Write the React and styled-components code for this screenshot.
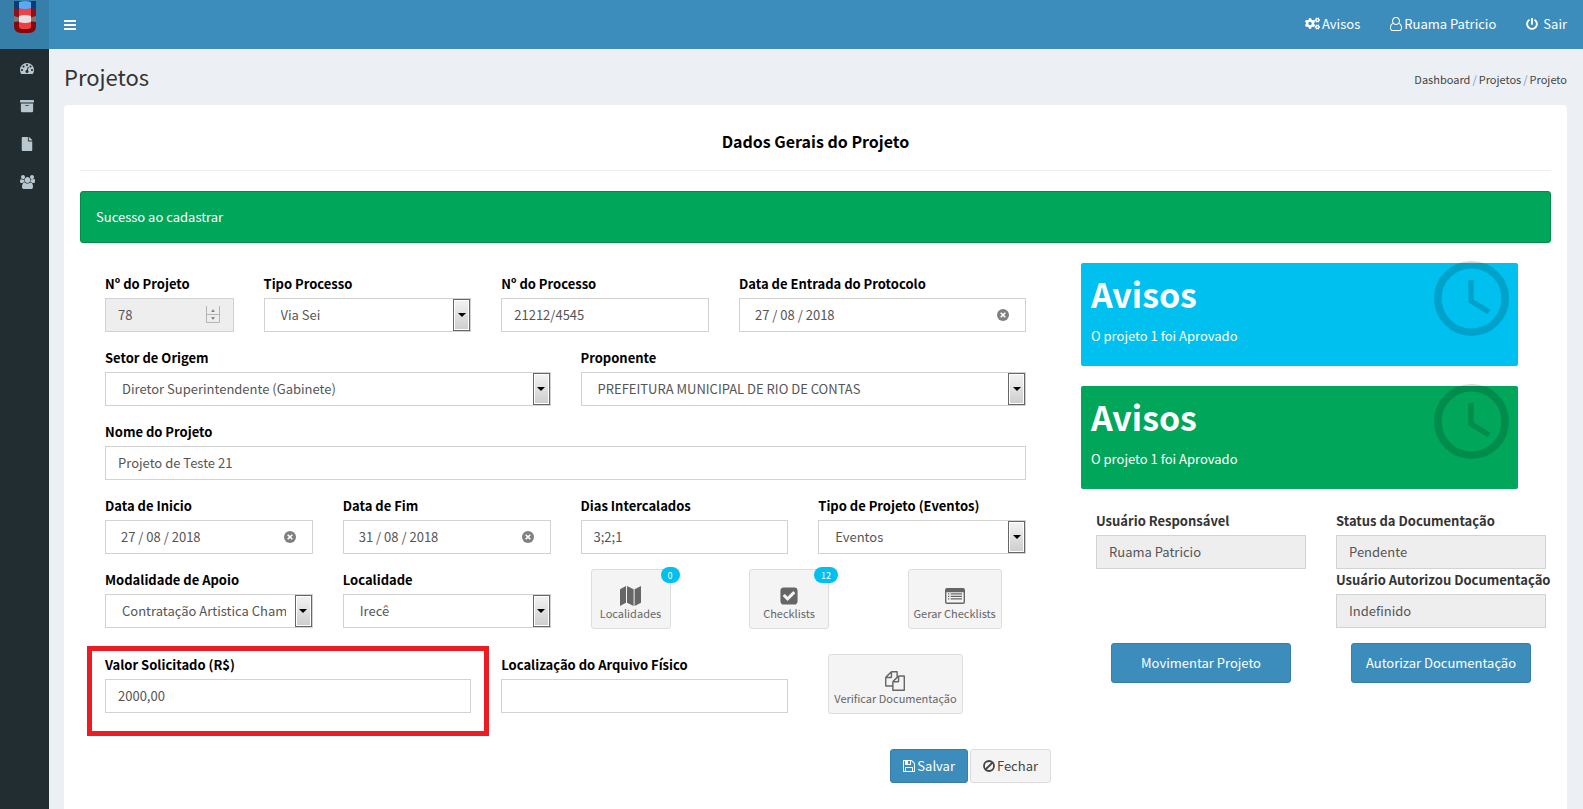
import React, { useState } from "react";
import styled, { createGlobalStyle } from "styled-components";
import { FaArchive, FaCogs, FaFile, FaPowerOff } from "react-icons/fa";

const GlobalStyle = createGlobalStyle`
  *, *::before, *::after {
    box-sizing: border-box;
  }
  body {
    margin: 0;
    background: #ecf0f5;
    color: #333;
    font-family: "Noto Sans CJK SC", "Noto Sans", sans-serif;
    font-size: 13px;
    line-height: 20px;
  }
  button, input, select {
    font: inherit;
  }
  a {
    color: inherit;
    text-decoration: none;
  }
`;

/* ---------- icons ---------- */

const Glyph = styled.svg`
  display: block;
  flex: none;
  height: ${props => props.$size || 14}px;
  fill: currentColor;
`;

const BarsIcon = () => (
  <Glyph $size={10} viewBox="0 0 12 10" shapeRendering="crispEdges" aria-hidden="true">
    <path d="M0 0h12v2H0zM0 4h12v2H0zM0 8h12v2H0z" />
  </Glyph>
);

const DashboardIcon = () => (
  <Glyph viewBox="0 0 1792 1792" aria-hidden="true">
    <path d="M384 1152q0-53-37.5-90.5t-90.5-37.5-90.5 37.5-37.5 90.5 37.5 90.5 90.5 37.5 90.5-37.5 37.5-90.5zm192-448q0-53-37.5-90.5t-90.5-37.5-90.5 37.5-37.5 90.5 37.5 90.5 90.5 37.5 90.5-37.5 37.5-90.5zm428 481l101-382q6-26-7.5-48.5t-38.5-29.5-48 6.5-30 39.5l-101 382q-60 5-107 43.5t-63 98.5q-20 77 20 146t117 89 146-20 89-117q16-60-6-117t-72-91zm660-33q0-53-37.5-90.5t-90.5-37.5-90.5 37.5-37.5 90.5 37.5 90.5 90.5 37.5 90.5-37.5 37.5-90.5zm-640-640q0-53-37.5-90.5t-90.5-37.5-90.5 37.5-37.5 90.5 37.5 90.5 90.5 37.5 90.5-37.5 37.5-90.5zm448 192q0-53-37.5-90.5t-90.5-37.5-90.5 37.5-37.5 90.5 37.5 90.5 90.5 37.5 90.5-37.5 37.5-90.5zm320 448q0 261-141 483-19 29-54 29h-1402q-35 0-54-29-141-221-141-483 0-182 71-348t191-286 286-191 348-71 348 71 286 191 191 286 71 348z" />
  </Glyph>
);

const GroupIcon = () => (
  <Glyph viewBox="0 0 1920 1792" aria-hidden="true">
    <path d="M593 896q-162 5-265 128h-134q-82 0-138-40.5t-56-118.5q0-353 124-353 6 0 43.5 21t97.5 42.5 119 21.5q67 0 133-23-5 37-5 66 0 159 90 294zm1071 637q0 120-73 189.5t-194 69.5h-874q-121 0-194-69.5t-73-189.5q0-53 3.5-103.5t14-109 26.5-108.5 43-97.5 62-81 85.5-53.5 111.5-20q10 0 43 21.5t73 48 107 48 135 21.5 135-21.5 107-48 73-48 43-21.5q61 0 111.5 20t85.5 53.5 62 81 43 97.5 26.5 108.5 14 109 3.5 103.5zm-1024-1277q0 106-75 181t-181 75-181-75-75-181 75-181 181-75 181 75 75 181zm704 384q0 159-112.5 271.5t-271.5 112.5-271.5-112.5-112.5-271.5 112.5-271.5 271.5-112.5 271.5 112.5 112.5 271.5zm576 225q0 78-56 118.5t-138 40.5h-134q-103-123-265-128 90-135 90-294 0-29-5-66 66 23 133 23 59 0 119-21.5t97.5-42.5 43.5-21q124 0 124 353zm-128-609q0 106-75 181t-181 75-181-75-75-181 75-181 181-75 181 75 75 181z" />
  </Glyph>
);

const UserIcon = () => (
  <Glyph viewBox="0 0 1536 1792" aria-hidden="true">
    <path d="M1201 784q47 14 89.5 38t89 73 79.5 115.5 55 172 22 236.5q0 154-100 263.5t-241 109.5h-854q-141 0-241-109.5t-100-263.5q0-131 22-236.5t55-172 79.5-115.5 89-73 89.5-38q-79-125-79-272 0-104 40.5-198.5t109.5-163.5 163.5-109.5 198.5-40.5 198.5 40.5 163.5 109.5 109.5 163.5 40.5 198.5q0 147-79 272zm-433-656q-159 0-271.5 112.5t-112.5 271.5 112.5 271.5 271.5 112.5 271.5-112.5 112.5-271.5-112.5-271.5-271.5-112.5zm427 1536q88 0 150.5-71.5t62.5-173.5q0-239-78.5-377t-225.5-145q-145 127-336 127t-336-127q-147 7-225.5 145t-78.5 377q0 102 62.5 173.5t150.5 71.5h854z" />
  </Glyph>
);

const MapIcon = () => (
  <Glyph $size={20} viewBox="0 0 21 20" aria-hidden="true">
    <path d="M0 3.2 6 0v16.8L0 20zM7 0l6.6 3.2V20L7 16.8zM14.6 3.2 21 0v16.8L14.6 20z" />
  </Glyph>
);

const CheckIcon = () => (
  <Glyph $size={20} viewBox="0 0 1792 1792" aria-hidden="true">
    <path d="M813 1299l614-614q19-19 19-45t-19-45l-102-102q-19-19-45-19t-45 19l-467 467-211-211q-19-19-45-19t-45 19l-102 102q-19 19-19 45t19 45l358 358q19 19 45 19t45-19zm851-883v960q0 119-84.5 203.5t-203.5 84.5h-960q-119 0-203.5-84.5t-84.5-203.5v-960q0-119 84.5-203.5t203.5-84.5h960q119 0 203.5 84.5t84.5 203.5z" />
  </Glyph>
);

const ListIcon = () => (
  <Glyph $size={20} viewBox="0 0 20 20" aria-hidden="true">
    <path
      fillRule="evenodd"
      d="M2 2h16a2 2 0 0 1 2 2v12a2 2 0 0 1-2 2H2a2 2 0 0 1-2-2V4a2 2 0 0 1 2-2zM1.4 6.2v9.8q0 .6.6.6h16q.6 0 .6-.6V6.2z"
    />
    <path d="M3 7.3h1.3v1.3H3zm2.6 0H17v1.3H5.6zM3 9.8h1.3v1.3H3zm2.6 0H17v1.3H5.6zM3 12.3h1.3v1.3H3zm2.6 0H17v1.3H5.6z" />
  </Glyph>
);

const FilesIcon = () => (
  <Glyph $size={20} viewBox="0 0 1792 1792" aria-hidden="true">
    <path d="M1696 384q40 0 68 28t28 68v1216q0 40-28 68t-68 28h-960q-40 0-68-28t-28-68v-288h-544q-40 0-68-28t-28-68v-672q0-40 20-88t48-76l408-408q28-28 76-48t88-20h416q40 0 68 28t28 68v328q68-40 128-40h416zm-544 213l-299 299h299v-299zm-640-384l-299 299h299v-299zm196 647l316-316v-416h-384v416q0 40-28 68t-68 28h-416v640h512v-256q0-40 20-88t48-76zm956 804v-1152h-384v416q0 40-28 68t-68 28h-416v640h896z" />
  </Glyph>
);

const SaveIcon = () => (
  <Glyph viewBox="128 0 1536 1792" aria-hidden="true">
    <path d="M512 1536h768v-384h-768v384zm896 0h128v-896q0-14-10-38.5t-20-34.5l-281-281q-10-10-34-20t-39-10v416q0 40-28 68t-68 28h-576q-40 0-68-28t-28-68v-416h-128v1280h128v-416q0-40 28-68t68-28h832q40 0 68 28t28 68v416zm-384-928v-320q0-13-9.5-22.5t-22.5-9.5h-192q-13 0-22.5 9.5t-9.5 22.5v320q0 13 9.5 22.5t22.5 9.5h192q13 0 22.5-9.5t9.5-22.5zm640 32v928q0 40-28 68t-68 28h-1344q-40 0-68-28t-28-68v-1344q0-40 28-68t68-28h928q40 0 88 20t76 48l280 280q28 28 48 76t20 88z" />
  </Glyph>
);

const BanIcon = () => (
  <Glyph viewBox="0 0 12 14" aria-hidden="true">
    <g fill="none" stroke="currentColor" strokeWidth="1.8">
      <circle cx="6" cy="7" r="5" />
      <path d="M2.5 10.5l7-7" />
    </g>
  </Glyph>
);

const ClockIcon = () => (
  <svg width="75" height="75" viewBox="0 0 75 75" aria-hidden="true">
    <g fill="none" stroke="#000">
      <circle cx="37.5" cy="37.5" r="33.7" strokeWidth="7.6" />
      <path d="M37 19v21l18 11" strokeWidth="5.4" />
    </g>
  </svg>
);

const LogoIcon = () => (
  <svg width="24" height="34" viewBox="0 0 24 34" aria-hidden="true">
    <path fill="#0b3a7c" d="M1 1h22v8q-11 5-22 0z" />
    <path fill="#8e1118" d="M1 8q11 4 22 0v9q-11 5-22 0z" />
    <path fill="#77777c" d="M1 16q11 4 22 0v7H1z" />
    <path fill="#86060d" d="M1 22q11-2 22 0v4q0 7-7 7H8q-7 0-7-7z" />
    <path fill="#5aa9f5" d="M6 2q6-2 12 0v7H6z" />
    <path fill="#ea4449" d="M6 8q6 2 12 0v9H6z" />
    <path fill="#e8dfe0" d="M6 16q6-2 12 0v7H6z" />
    <path fill="#ee3e44" d="M6 22q6 2 12 0v4q0 3-3 3H9q-3 0-3-3z" />
  </svg>
);

/* ---------- page frame ---------- */

const Page = styled.div`
  display: flex;
  flex-direction: column;
  min-height: 100vh;
`;

const Header = styled.header`
  display: flex;
  height: 49px;
  color: #fff;
  background: #3c8dbc;
`;

const Logo = styled.a`
  display: flex;
  justify-content: center;
  width: 49px;
  background: #367fa9;
`;

const MenuToggle = styled.button`
  display: flex;
  align-items: center;
  padding: 0 15px;
  border: 0;
  color: inherit;
  background: none;
`;

const UserNav = styled.nav`
  display: flex;
  align-items: center;
  gap: 30px;
  margin-left: auto;
  padding: 0 16px 2px 0;
`;

const NavLink = styled.a`
  display: flex;
  align-items: center;
  gap: ${props => props.$gap || 2}px;
`;

const Body = styled.div`
  display: flex;
  flex: 1;
`;

const Sidebar = styled.nav`
  flex: none;
  width: 49px;
  background: #222d32;
`;

const SideLink = styled.a`
  display: flex;
  align-items: center;
  justify-content: center;
  height: 38px;
  padding-left: 5px;
  color: #b8c7ce;
  font-size: 14px;
`;

const Main = styled.main`
  display: flex;
  flex: 1;
  flex-direction: column;
  min-width: 0;
  padding: 0 16px 0 15px;
`;

const ContentHeader = styled.div`
  display: flex;
  align-items: center;
  justify-content: space-between;
  height: 56px;
`;

const PageTitle = styled.h1`
  margin: 0;
  padding-bottom: 2px;
  font-size: 22px;
  font-weight: 400;
`;

const Breadcrumb = styled.nav`
  display: flex;
  gap: 2px;
  padding-top: 4px;
  color: #444;
  font-size: 11px;
`;

const Slash = styled.span`
  color: #7a9cb5;
`;

const Box = styled.section`
  flex: 1;
  padding: 26px 16px;
  border-radius: 4px 4px 0 0;
  background: #fff;
`;

const BoxTitle = styled.h2`
  margin: 0 0 20px;
  padding-bottom: 19px;
  border-bottom: 1px solid #eee;
  color: #000;
  font-size: 16px;
  font-weight: 700;
  text-align: center;
`;

const Alert = styled.div`
  margin-bottom: 20px;
  padding: 15px;
  border: 1px solid #008d4c;
  border-radius: 3px;
  color: #fff;
  background: #00a65a;
`;

const Columns = styled.div`
  display: grid;
  grid-template-columns: minmax(0, 971fr) minmax(0, 470fr);
  gap: 30px;
`;

/* ---------- form ---------- */

const FormGrid = styled.div`
  display: grid;
  grid-template-columns: repeat(12, minmax(0, 1fr));
  gap: 15px 30px;
  padding: 10px 25px 0;
`;

const Field = styled.div`
  position: relative;
  grid-column: span ${props => props.$span || 1};
`;

/* red frame drawn over the form, around one field */
const MarkedField = styled(Field)`
  &::after {
    content: "";
    position: absolute;
    top: -8px;
    right: -18px;
    left: -18px;
    height: 90px;
    border: 5px solid #ed1c24;
    pointer-events: none;
  }
`;

const Label = styled.label`
  display: block;
  padding: 1px 0 4px;
  color: ${props => (props.$soft ? "#333" : "#000")};
  font-weight: 700;
  white-space: nowrap;
`;

const Control = styled.div`
  position: relative;
`;

const Input = styled.input`
  display: block;
  width: 100%;
  height: 34px;
  padding: 5px ${props => (props.$date ? 15 : 12)}px 7px;
  border: 1px solid #d2d2d2;
  border-radius: 0;
  color: #555;
  background: #fff;
  appearance: textfield;

  &::-webkit-inner-spin-button {
    display: none;
  }
  &:disabled {
    background: #eee;
  }
`;

const Select = styled.select`
  display: block;
  width: 100%;
  height: 34px;
  padding: 0 26px 0 16px;
  border: 1px solid #d2d2d2;
  border-radius: 0;
  color: #555;
  background: #fff;
  appearance: none;
`;

const SelectArrow = styled.span`
  position: absolute;
  top: 1px;
  right: 1px;
  bottom: 1px;
  display: flex;
  align-items: center;
  justify-content: center;
  width: 17px;
  border: 1px solid #666;
  background: linear-gradient(#f3f3f3, #cdcdcd);
  box-shadow: inset 0 0 0 1px #fff;
  pointer-events: none;

  &::after {
    content: "";
    border: 4px solid transparent;
    border-top-color: #000;
    border-bottom-width: 0;
  }
`;

const Spinner = styled.svg`
  position: absolute;
  top: 8px;
  right: 14px;
  pointer-events: none;
`;

const ClearButton = styled.button`
  position: absolute;
  top: 11px;
  right: 17px;
  width: 12px;
  height: 12px;
  padding: 0;
  border: 0;
  background: none;

  svg {
    display: block;
  }
`;

const AppSlot = styled.div`
  grid-column: span ${props => props.$span || 2};
  padding: 0 0 10px 10px;
`;

const AppButton = styled.button`
  position: relative;
  display: inline-flex;
  flex-direction: column;
  align-items: center;
  min-width: 80px;
  height: 60px;
  padding: 16px 5px 0;
  border: 1px solid #ddd;
  border-radius: 3px;
  color: #666;
  background: #f4f4f4;
  font-size: 11px;
  line-height: 15px;
  white-space: nowrap;
`;

const Badge = styled.span`
  position: absolute;
  top: -3px;
  right: -10px;
  padding: 1px 7px 0;
  border-radius: 8px;
  color: #fff;
  background: #00c0ef;
  font-size: 9px;
`;

const Actions = styled.div`
  display: flex;
  justify-content: flex-end;
  gap: 2px;
  margin-top: 25px;
`;

const Button = styled.button`
  display: flex;
  align-items: center;
  justify-content: center;
  gap: 2px;
  height: 34px;
  padding: 0 12px;
  border: 1px solid ${props => (props.$primary ? "#367fa9" : "#ddd")};
  border-radius: 3px;
  color: ${props => (props.$primary ? "#fff" : "#444")};
  background: ${props => (props.$primary ? "#3c8dbc" : "#f4f4f4")};
  white-space: nowrap;
`;

const WideButton = styled(Button)`
  height: 40px;
  margin: 15px 15px 0;
`;

/* ---------- notices ---------- */

const Notice = styled.article`
  position: relative;
  margin: 0 33px 20px 0;
  padding: 10px 10px 20px;
  border-radius: 2px;
  color: #fff;
  background: ${props => props.$color};

  h3 {
    margin: 0 0 11px;
    font-size: 34px;
    font-weight: 700;
    line-height: 42px;
  }
  p {
    margin: 0;
  }
  svg {
    position: absolute;
    top: -2px;
    right: 9px;
    opacity: 0.15;
  }
`;

const InfoGrid = styled.div`
  display: grid;
  grid-template-columns: repeat(2, minmax(0, 1fr));
  gap: 0 30px;
  padding: 1px 5px 0 15px;
`;

const TextField = ({ id, label, span, soft, ...rest }) => (
  <Field $span={span}>
    <Label htmlFor={id} $soft={soft}>
      {label}
    </Label>
    <Input id={id} type="text" {...rest} />
  </Field>
);

const SelectField = ({ id, label, span, option }) => (
  <Field $span={span}>
    <Label htmlFor={id}>{label}</Label>
    <Control>
      <Select id={id} defaultValue={option}>
        <option>{option}</option>
      </Select>
      <SelectArrow />
    </Control>
  </Field>
);

const DateField = ({ id, label, span, date }) => {
  const [value, setValue] = useState(date);
  return (
    <Field $span={span}>
      <Label htmlFor={id}>{label}</Label>
      <Control>
        <Input
          id={id}
          $date
          type="text"
          value={value}
          onChange={e => setValue(e.target.value)}
        />
        <ClearButton
          type="button"
          aria-label="Limpar data"
          onClick={() => setValue("")}
        >
          <svg width="12" height="12" viewBox="0 0 12 12">
            <circle cx="6" cy="6" r="6" fill="#808080" />
            <path d="M3.7 3.7l4.6 4.6M8.3 3.7L3.7 8.3" stroke="#fff" strokeWidth="1.6" />
          </svg>
        </ClearButton>
      </Control>
    </Field>
  );
};

const NoticeCard = ({ color }) => (
  <Notice $color={color}>
    <h3>Avisos</h3>
    <p>O projeto 1 foi Aprovado</p>
    <ClockIcon />
  </Notice>
);

const App = () => {
  return (
    <Page>
      <GlobalStyle />
      <Header>
        <Logo href="#" aria-label="Início">
          <LogoIcon />
        </Logo>
        <MenuToggle type="button" aria-label="Menu">
          <BarsIcon />
        </MenuToggle>
        <UserNav>
          <NavLink href="#">
            <FaCogs size={15} /> Avisos
          </NavLink>
          <NavLink href="#">
            <UserIcon /> Ruama Patricio
          </NavLink>
          <NavLink href="#" $gap={5}>
            <FaPowerOff size={12} /> Sair
          </NavLink>
        </UserNav>
      </Header>
      <Body>
        <Sidebar>
          <SideLink href="#" aria-label="Dashboard">
            <DashboardIcon />
          </SideLink>
          <SideLink href="#" aria-label="Projetos">
            <FaArchive />
          </SideLink>
          <SideLink href="#" aria-label="Documentos">
            <FaFile />
          </SideLink>
          <SideLink href="#" aria-label="Usuários">
            <GroupIcon />
          </SideLink>
        </Sidebar>
        <Main>
          <ContentHeader>
            <PageTitle>Projetos</PageTitle>
            <Breadcrumb>
              <a href="#">Dashboard</a>
              <Slash>/</Slash>
              <a href="#">Projetos</a>
              <Slash>/</Slash>
              <a href="#">Projeto</a>
            </Breadcrumb>
          </ContentHeader>
          <Box>
            <BoxTitle>Dados Gerais do Projeto</BoxTitle>
            <Alert role="alert">Sucesso ao cadastrar</Alert>
            <Columns>
              <form onSubmit={e => e.preventDefault()}>
                <FormGrid>
                  <Field $span={2}>
                    <Label htmlFor="numero">Nº do Projeto</Label>
                    <Control>
                      <Input id="numero" type="number" defaultValue="78" disabled />
                      <Spinner width="14" height="18" viewBox="0 0 14 18">
                        <path
                          d="M.5 0v16.5h13V0M0 8.5h14"
                          fill="none"
                          stroke="#b4b4b4"
                        />
                        <path d="M5 6l2-3 2 3zM5 11l2 3 2-3z" fill="#888" />
                      </Spinner>
                    </Control>
                  </Field>
                  <SelectField id="tipo" label="Tipo Processo" span={3} option="Via Sei" />
                  <TextField
                    id="processo"
                    label="Nº do Processo"
                    span={3}
                    defaultValue="21212/4545"
                  />
                  <DateField
                    id="entrada"
                    label="Data de Entrada do Protocolo"
                    span={4}
                    date="27 / 08 / 2018"
                  />
                  <SelectField
                    id="setor"
                    label="Setor de Origem"
                    span={6}
                    option="Diretor Superintendente (Gabinete)"
                  />
                  <SelectField
                    id="proponente"
                    label="Proponente"
                    span={6}
                    option="PREFEITURA MUNICIPAL DE RIO DE CONTAS"
                  />
                  <TextField
                    id="nome"
                    label="Nome do Projeto"
                    span={12}
                    defaultValue="Projeto de Teste 21"
                  />
                  <DateField id="inicio" label="Data de Inicio" span={3} date="27 / 08 / 2018" />
                  <DateField id="fim" label="Data de Fim" span={3} date="31 / 08 / 2018" />
                  <TextField
                    id="dias"
                    label="Dias Intercalados"
                    span={3}
                    defaultValue="3;2;1"
                  />
                  <SelectField
                    id="tipoProjeto"
                    label="Tipo de Projeto (Eventos)"
                    span={3}
                    option="Eventos"
                  />
                  <SelectField
                    id="modalidade"
                    label="Modalidade de Apoio"
                    span={3}
                    option="Contratação Artistica Chamada"
                  />
                  <SelectField id="localidade" label="Localidade" span={3} option="Irecê" />
                  <AppSlot>
                    <AppButton type="button">
                      <Badge>0</Badge>
                      <MapIcon />
                      Localidades
                    </AppButton>
                  </AppSlot>
                  <AppSlot>
                    <AppButton type="button">
                      <Badge>12</Badge>
                      <CheckIcon />
                      Checklists
                    </AppButton>
                  </AppSlot>
                  <AppSlot>
                    <AppButton type="button">
                      <ListIcon />
                      Gerar Checklists
                    </AppButton>
                  </AppSlot>
                  <MarkedField $span={5}>
                    <Label htmlFor="valor">Valor Solicitado (R$)</Label>
                    <Input id="valor" type="text" defaultValue="2000,00" />
                  </MarkedField>
                  <TextField
                    id="arquivo"
                    label="Localização do Arquivo Físico"
                    span={4}
                    defaultValue=""
                  />
                  <AppSlot $span={3}>
                    <AppButton type="button">
                      <FilesIcon />
                      Verificar Documentação
                    </AppButton>
                  </AppSlot>
                </FormGrid>
                <Actions>
                  <Button type="submit" $primary>
                    <SaveIcon /> Salvar
                  </Button>
                  <Button type="button">
                    <BanIcon /> Fechar
                  </Button>
                </Actions>
              </form>
              <aside>
                <NoticeCard color="#00c0ef" />
                <NoticeCard color="#00a65a" />
                <InfoGrid>
                  <TextField
                    id="responsavel"
                    label="Usuário Responsável"
                    soft
                    disabled
                    defaultValue="Ruama Patricio"
                  />
                  <div>
                    <TextField
                      id="status"
                      label="Status da Documentação"
                      soft
                      disabled
                      defaultValue="Pendente"
                    />
                    <TextField
                      id="autorizou"
                      label="Usuário Autorizou Documentação"
                      soft
                      disabled
                      defaultValue="Indefinido"
                    />
                  </div>
                  <WideButton type="button" $primary>
                    Movimentar Projeto
                  </WideButton>
                  <WideButton type="button" $primary>
                    Autorizar Documentação
                  </WideButton>
                </InfoGrid>
              </aside>
            </Columns>
          </Box>
        </Main>
      </Body>
    </Page>
  );
};

export default App;
